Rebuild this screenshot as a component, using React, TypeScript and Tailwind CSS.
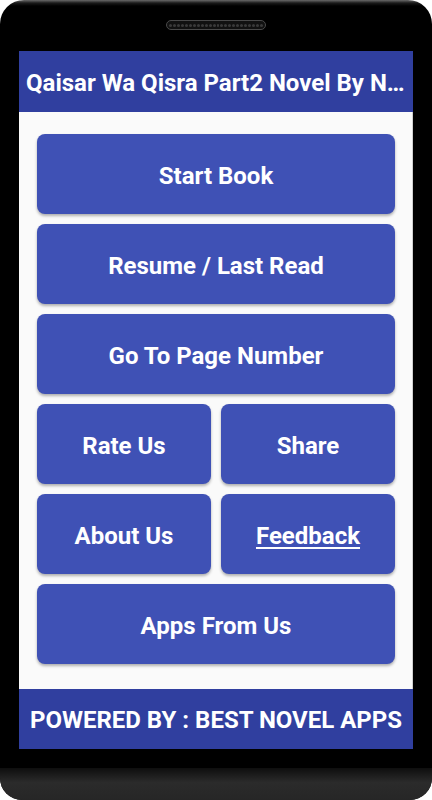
import React from "react";

const Btn = ({ label, underline = false }: { label: string; underline?: boolean }) => (
  <div className="h-[80px] rounded-[8px] bg-[#3f51b5] shadow-[0_2px_3px_rgba(0,0,0,0.3)] flex items-center justify-center pt-[3px]">
    <span className={`text-white font-bold text-[24px] leading-none ${underline ? "underline underline-offset-[3px] decoration-2" : ""}`}>{label}</span>
  </div>
);

export default function App() {
  const dots = Array.from({ length: 24 });
  return (
    <div className="w-[432px] h-[800px] bg-white" style={{ fontFamily: "Roboto, 'Liberation Sans', sans-serif" }}>
      <div className="w-full h-full rounded-t-[24px] rounded-b-[22px] bg-[linear-gradient(#6a6a6a_0px,#1a1a1a_3px,#000_6px)] flex flex-col overflow-hidden">
        <div className="h-[51px] shrink-0 flex justify-center pt-[20px]">
          <div className="w-[100px] h-[10px] rounded-full bg-[#111] border border-[#4a4a4a] flex items-center justify-center gap-[1px] px-[2px]">
            {dots.map((_, i) => (
              <div key={i} className="w-[3px] h-[3px] rounded-full bg-[#3a3a3a]" />
            ))}
          </div>
        </div>
        <div className="mx-[19px] w-[394px] h-[698px] shrink-0 flex flex-col">
          <div className="h-[61px] shrink-0 bg-[#303f9f] flex items-center px-[7px] pt-[2px]">
            <div className="text-white font-bold text-[24px] leading-[30px] whitespace-nowrap overflow-hidden text-ellipsis w-full text-center">
              Qaisar Wa Qisra Part2 Novel By Nasim Hijazi
            </div>
          </div>
          <div className="flex-1 bg-[#fafafa] border-r border-[#d0d0d0] pt-[22px] pl-[18px] pr-[17px] flex flex-col gap-[10px]">
            <Btn label="Start Book" />
            <Btn label="Resume / Last Read" />
            <Btn label="Go To Page Number" />
            <div className="grid grid-cols-2 gap-[10px]">
              <Btn label="Rate Us" />
              <Btn label="Share" />
            </div>
            <div className="grid grid-cols-2 gap-[10px]">
              <Btn label="About Us" />
              <Btn label="Feedback" underline />
            </div>
            <Btn label="Apps From Us" />
          </div>
          <div className="h-[60px] shrink-0 bg-[#303f9f] flex items-center justify-center pt-[2px]">
            <span className="text-white font-bold text-[24px] leading-none whitespace-nowrap">POWERED BY : BEST NOVEL APPS</span>
          </div>
        </div>
        <div className="h-[19px] shrink-0 bg-black" />
        <div className="flex-1 bg-[linear-gradient(#0e0e0e,#2b2b2b_45%,#262626)]" />
      </div>
    </div>
  );
}
